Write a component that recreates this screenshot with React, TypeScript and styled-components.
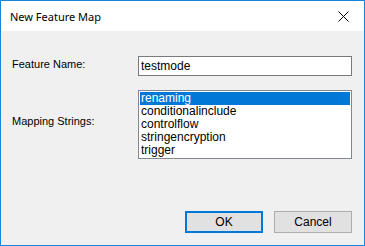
import { FC } from "react";
import styled, { createGlobalStyle } from "styled-components";

const items = ["renaming", "conditionalinclude", "controlflow", "stringencryption", "trigger"];

const App: FC = () => {
    return <>
        <GlobalStyle />
        <Window>
            <TitleBar>
                <Title>New Feature Map</Title>
                <CloseButton>
                    <svg width="11" height="11" viewBox="0 0 11 11">
                        <path d="M0.5 0.5 L10.5 10.5 M10.5 0.5 L0.5 10.5" stroke="#000" strokeWidth="1" fill="none" />
                    </svg>
                </CloseButton>
            </TitleBar>

            <Body>
                <Form>
                    <Label>Feature Name:</Label>
                    <TextBox>testmode</TextBox>

                    <Label $offset={25}>Mapping Strings:</Label>
                    <ListBox>
                        {items.map((item, i) => (
                            <ListItem key={item} $selected={i === 0}>{item}</ListItem>
                        ))}
                    </ListBox>
                </Form>

                <Footer>
                    <Button $primary>OK</Button>
                    <Button>Cancel</Button>
                </Footer>
            </Body>
        </Window>
    </>
}

const GlobalStyle = createGlobalStyle`
    html, body {
        margin: 0;
        padding: 0;
        background: #ffffff;
    }
`

const Window = styled.div`
    width: 365px;
    height: 246px;
    box-sizing: border-box;
    border: 1px solid #1883d7;
    display: flex;
    flex-direction: column;
    font-family: "Liberation Sans", Arial, sans-serif;
    font-size: 11px;
    color: #000;
`

const TitleBar = styled.div`
    height: 30px;
    background: #ffffff;
    display: flex;
    flex-direction: row;
    align-items: center;
    justify-content: space-between;
    padding: 0 6px 0 9px;
`

const Title = styled.div`
    font-family: "Noto Sans", "Open Sans", sans-serif;
    font-size: 11px;
    color: #000;
    padding-top: 1px;
`

const CloseButton = styled.div`
    width: 30px;
    height: 30px;
    display: flex;
    align-items: center;
    justify-content: center;
`

const Body = styled.div`
    flex: 1;
    background: #f0f0f0;
    display: flex;
    flex-direction: column;
    padding: 25px 12px 12px 11px;
`

const Form = styled.div`
    display: grid;
    grid-template-columns: 126px 214px;
    row-gap: 14px;
`

const Label = styled.div<{ $offset?: number }>`
    margin-top: ${p => p.$offset ?? 2}px;
    line-height: 13px;
`

const TextBox = styled.div`
    height: 20px;
    box-sizing: border-box;
    border: 1px solid #7a7a7a;
    background: #ffffff;
    padding: 0 2px;
    display: flex;
    align-items: center;
    font-size: 12px;
`

const ListBox = styled.div`
    height: 69px;
    box-sizing: border-box;
    border: 1px solid #828790;
    background: #ffffff;
    padding: 1px;
    display: flex;
    flex-direction: column;
    overflow: hidden;
`

const ListItem = styled.div<{ $selected?: boolean }>`
    height: 13px;
    line-height: 13px;
    padding-left: 1px;
    font-size: 12px;
    background: ${p => p.$selected ? "#0078d7" : "transparent"};
    color: ${p => p.$selected ? "#ffffff" : "#000"};
    flex-shrink: 0;
`

const Footer = styled.div`
    margin-top: auto;
    display: flex;
    flex-direction: row;
    justify-content: flex-end;
    gap: 11px;
`

const Button = styled.div<{ $primary?: boolean }>`
    width: 78px;
    height: 22px;
    box-sizing: border-box;
    background: #e1e1e1;
    border: ${p => p.$primary ? "2px solid #0078d7" : "1px solid #adadad"};
    display: flex;
    align-items: center;
    justify-content: center;
    font-size: 12px;
`

export default App
